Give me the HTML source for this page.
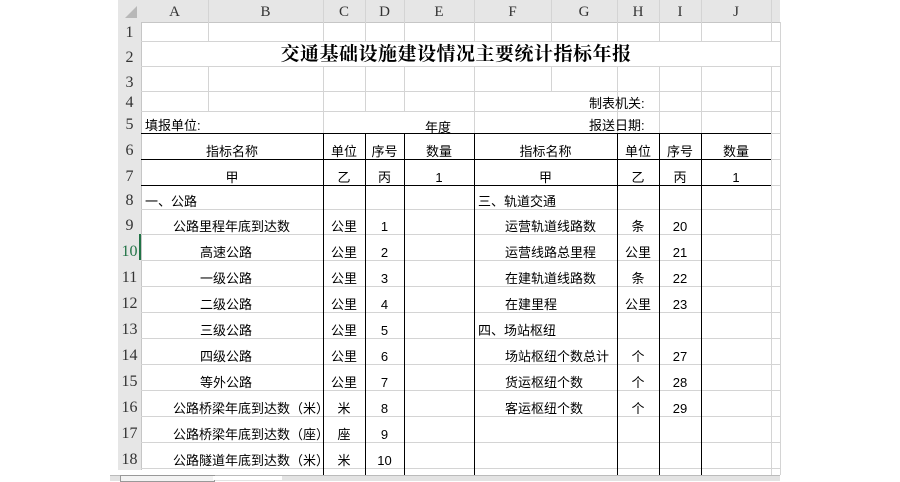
<!DOCTYPE html>
<html><head><meta charset="utf-8"><style>
body{margin:0;width:900px;height:480px;background:#fff;position:relative;overflow:hidden;font-family:"Liberation Sans","Noto Sans CJK SC",sans-serif;font-size:13px;color:#000}
.a{position:absolute}
.h{background:#d4d4d4}
.k{background:#000}
.t{position:absolute;white-space:nowrap;line-height:26px}
.hd{position:absolute;font-family:"Liberation Serif",serif;font-size:16px;line-height:18px;color:#333;text-align:center}
</style></head><body>
<div class="a" style="left:118px;top:0;width:662px;height:22px;background:#e6e6e6;border-bottom:1px solid #c6c6c6"></div>
<div class="a" style="left:118px;top:22px;width:23px;height:448px;background:#e6e6e6;border-right:1px solid #c6c6c6"></div>
<div class="a" style="left:125px;top:6px;width:0;height:0;border-left:12px solid transparent;border-bottom:12px solid #b8b8b8"></div>
<div id="g"></div>
<div class="a" style="left:110px;top:475px;width:670px;height:5px;background:#e3e3e3;border-top:1px solid #bbb"></div>
<div class="a" style="left:120px;top:475px;width:93px;height:5px;background:#f3f3f3;border:1px solid #999"></div>
<div class="a" style="left:213px;top:476px;width:69px;height:4px;background:#fff"></div>
<script>
var cols=[141,208,323,365,404,474,551,617,659,701,771,780];
var names="ABCDEFGHIJ";
var rows=[22,41,66,91,111,133,159,185,209,234,260,286,312,338,364,390,416,442,468];
var h='';
function d(x,y,w,hh,c){h+='<div class="a '+c+'" style="left:'+x+'px;top:'+y+'px;width:'+w+'px;height:'+hh+'px"></div>';}
for(var i=0;i<10;i++){var x=cols[i],w=cols[i+1]-x;h+='<div class="hd" style="left:'+x+'px;top:3px;width:'+w+'px;font-size:15px">'+names[i]+'</div>';d(cols[i+1],0,1,22,'h');}
for(var r=0;r<18;r++){var y=rows[r],b=rows[r+1];h+='<div class="hd" style="left:118px;top:'+(b-17)+'px;width:23px;'+(r==9?'color:#217346':'')+'">'+(r+1)+'</div>';d(141,b,639,1,'h');}
h+='<div class="a" style="left:139px;top:234px;width:2px;height:26px;background:#217346"></div>';
function vs(x,y1,y2,c){d(x,y1,1,y2-y1,c);}
for(var i=1;i<11;i++){var x=cols[i];
 vs(x,22,41,'h');vs(x,66,91,'h');
 if(x!=551)vs(x,91,111,'h');
 if(x!=208&&x!=551&&x!=365&&x!=404)vs(x,111,133,'h');
 if([323,365,404,474,617,659,701].indexOf(x)<0&&x!=208&&x!=551)vs(x,133,475,'h');
}
vs(780,22,475,'h');
[323,365,404,474,617,659,701].forEach(function(x){vs(x,133,475,'k')});
d(141,133,630,1,'k');d(141,159,630,1,'k');d(141,185,630,1,'k');
function t(x,b,s,st){h+='<div class="t" style="left:'+x+'px;top:'+(b-20)+'px;'+(st||'')+'">'+s+'</div>';}
function c(x1,x2,b,s,st){h+='<div class="t" style="left:'+x1+'px;top:'+(b-20)+'px;width:'+(x2-x1)+'px;text-align:center;'+(st||'')+'">'+s+'</div>';}
h+='<div class="t" style="left:141px;top:42px;width:630px;text-align:center;font-family:\'Liberation Serif\',\'Noto Serif CJK SC\',serif;font-weight:bold;font-size:19px;letter-spacing:0.5px;line-height:26px">交通基础设施建设情况主要统计指标年报</div>';
t(589,111,'制表机关:');t(589,133,'报送日期:');
t(145,133,'填报单位:');t(425,135,'年度');
var hr=[[141,323],[323,365],[365,404],[404,474],[474,617],[617,659],[659,701],[701,771]];
var r6=['指标名称','单位','序号','数量','指标名称','单位','序号','数量'],r7=['甲','乙','丙','1','甲','乙','丙','1'];
hr.forEach(function(p,i){c(p[0],p[1],159,r6[i]);c(p[0],p[1],185,r7[i]);});
var L=[['一、公路',145,'',''],['公路里程年底到达数',173,'公里','1'],['高速公路',200,'公里','2'],['一级公路',200,'公里','3'],['二级公路',200,'公里','4'],['三级公路',200,'公里','5'],['四级公路',200,'公里','6'],['等外公路',200,'公里','7'],['公路桥梁年底到达数（米）',173,'米','8'],['公路桥梁年底到达数（座）',173,'座','9'],['公路隧道年底到达数（米）',173,'米','10']];
var R=[['三、轨道交通',478,'',''],['运营轨道线路数',505,'条','20'],['运营线路总里程',505,'公里','21'],['在建轨道线路数',505,'条','22'],['在建里程',505,'公里','23'],['四、场站枢纽',478,'',''],['场站枢纽个数总计',505,'个','27'],['货运枢纽个数',505,'个','28'],['客运枢纽个数',505,'个','29']];
L.forEach(function(e,i){var b=rows[i+8];t(e[1],b,e[0]);c(323,365,b,e[2]);c(365,404,b,e[3]);});
R.forEach(function(e,i){var b=rows[i+8];t(e[1],b,e[0]);c(617,659,b,e[2]);c(659,701,b,e[3]);});
document.getElementById('g').innerHTML=h;
</script>
</body></html>
